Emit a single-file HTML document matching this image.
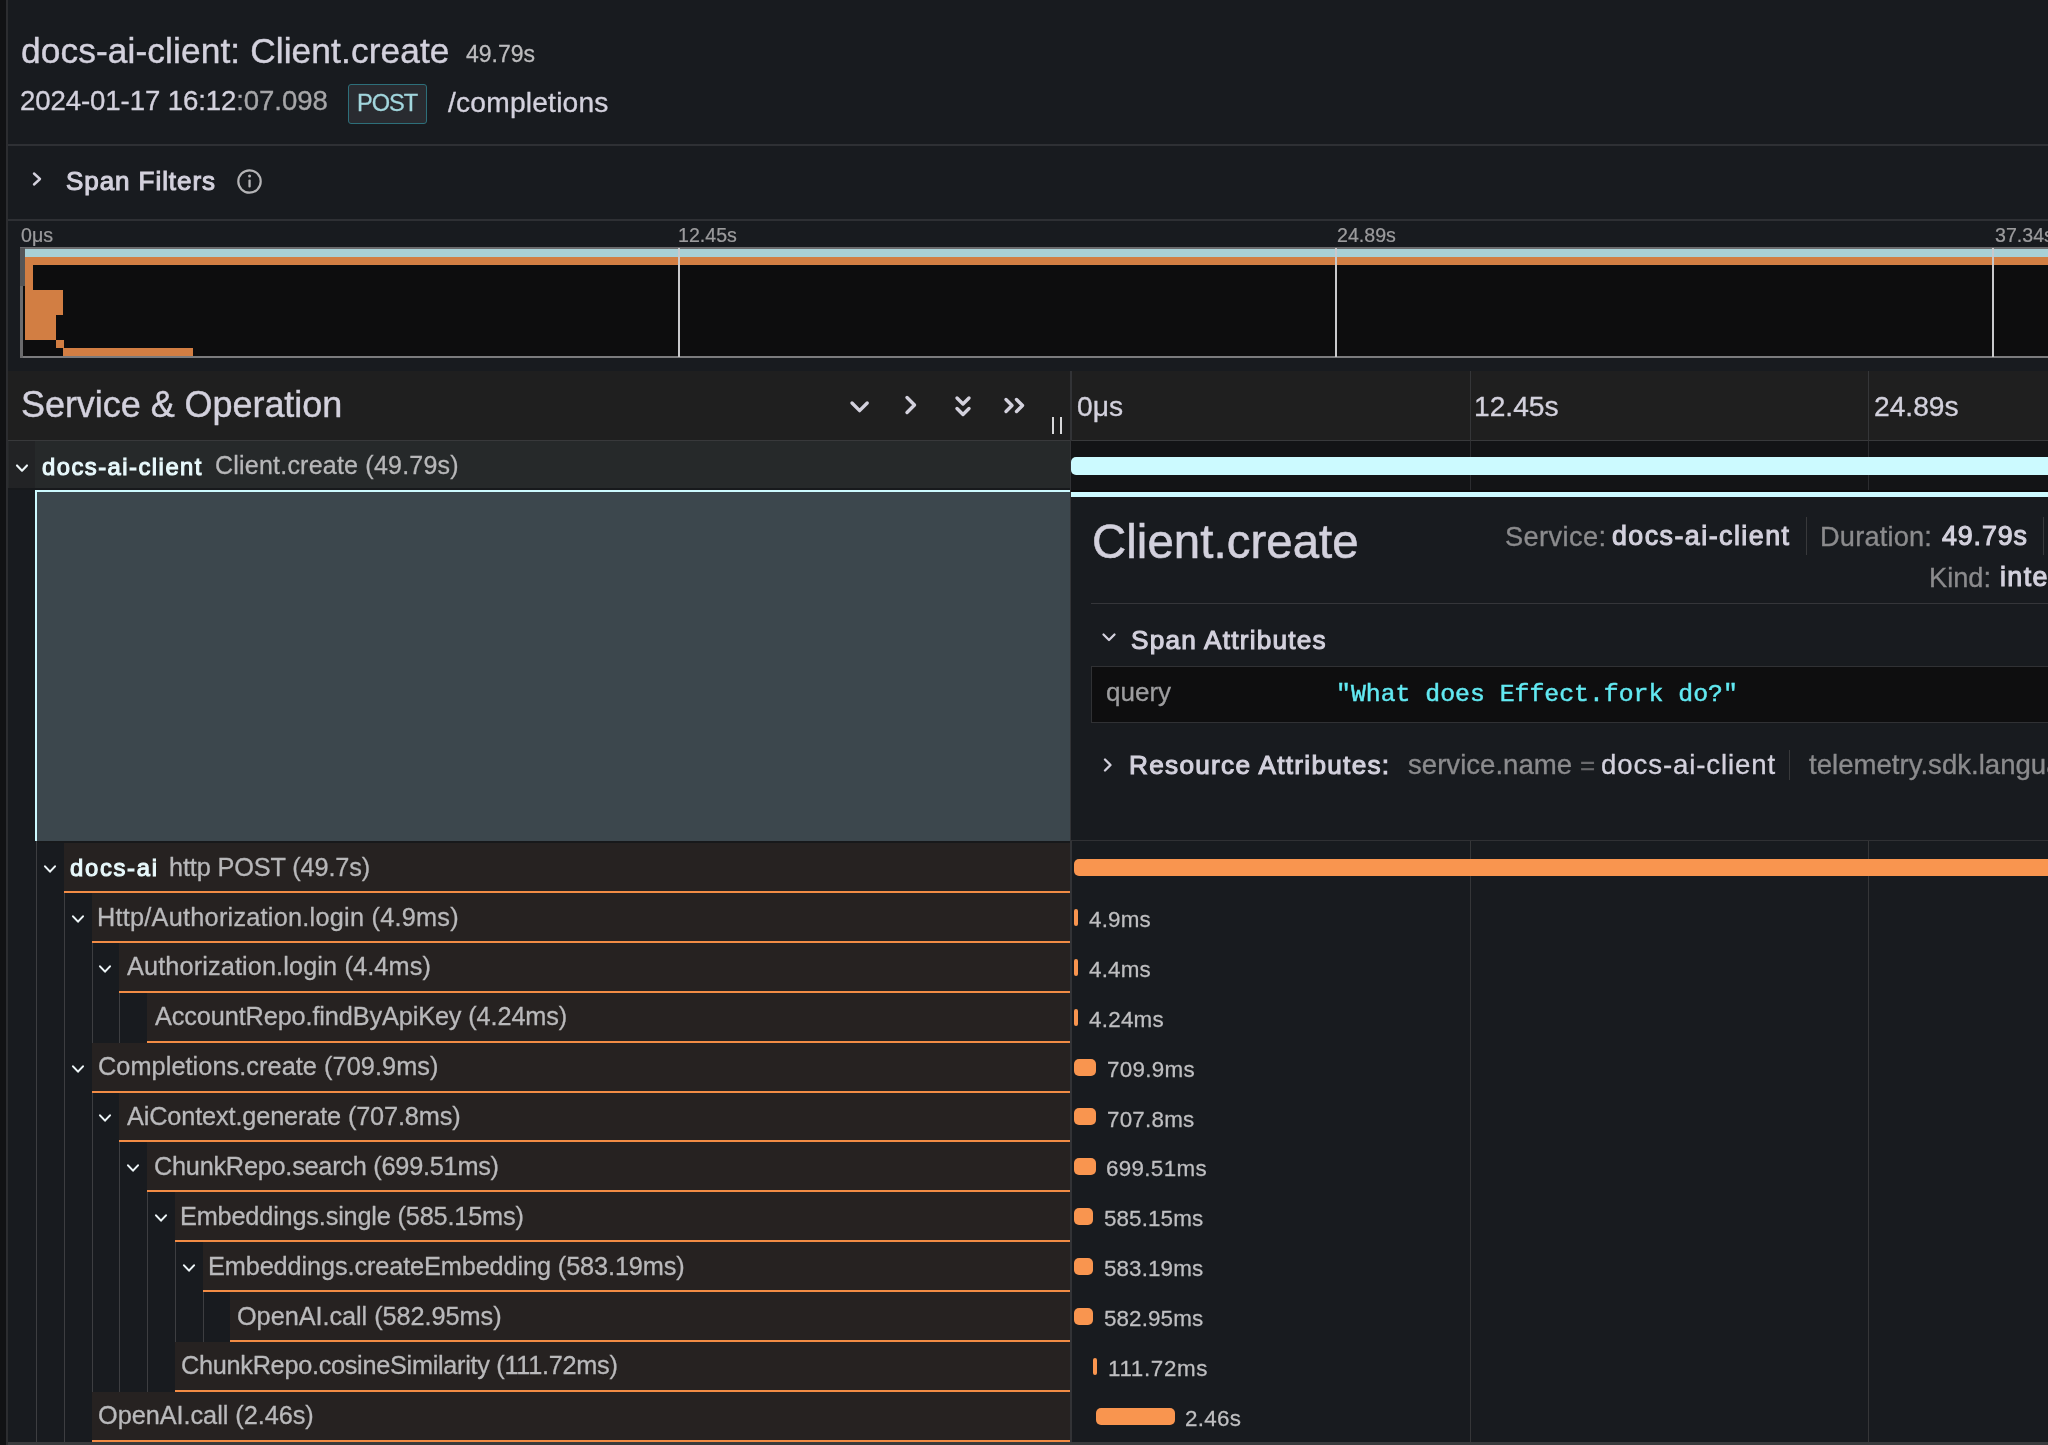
<!DOCTYPE html>
<html><head><meta charset="utf-8"><style>
html,body{margin:0;padding:0;}
body{width:2048px;height:1445px;overflow:hidden;background:#181b1f;position:relative;font-family:'Liberation Sans', sans-serif;}
body>div,body>svg{position:absolute;box-sizing:border-box;}
.t{white-space:pre;will-change:transform;}
</style></head><body>
<div style="left:0px;top:0px;width:6px;height:1445px;background:#111214;"></div>
<div style="left:6px;top:0px;width:2px;height:1445px;background:#2c2d30;"></div>
<div style="left:348px;top:84px;width:79px;height:40px;border:1px solid #2d6f7a;border-radius:3px;background:#292b30"></div>
<div style="left:8px;top:144px;width:2040px;height:2px;background:#2e3034;"></div>
<svg style="left:30px;top:170px" width="14" height="18" viewBox="0 0 14 18"><path d="M4 3.5 L10 9 L4 14.5" fill="none" stroke="#d3d1dd" stroke-width="2.4" stroke-linecap="round" stroke-linejoin="round"/></svg>
<svg style="left:236px;top:168px" width="27" height="27" viewBox="0 0 27 27"><circle cx="13.5" cy="13.5" r="11.2" fill="none" stroke="#b4b4b6" stroke-width="2.2"/><rect x="12.4" y="11.5" width="2.3" height="8" rx="1" fill="#b4b4b6"/><circle cx="13.55" cy="8" r="1.5" fill="#b4b4b6"/></svg>
<div style="left:8px;top:219px;width:2040px;height:2px;background:#2e3034;"></div>
<div style="left:20px;top:248px;width:2028px;height:110px;background:#0d0d0e;"></div>
<div style="left:20px;top:247px;width:2028px;height:2px;background:#6b6b6d;"></div>
<div style="left:20px;top:356px;width:2028px;height:2px;background:#7b7b7d;"></div>
<div style="left:20px;top:248px;width:3px;height:110px;background:#6b6b6d;"></div>
<div style="left:20px;top:248px;width:5px;height:38px;background:#555557;"></div>
<div style="left:25px;top:249px;width:2023px;height:7.5px;background:#a9d0d6;"></div>
<div style="left:25px;top:256.5px;width:2023px;height:8px;background:#d27e43;"></div>
<div style="left:25px;top:264.5px;width:8px;height:8.4px;background:#d27e43;"></div>
<div style="left:25px;top:272.9px;width:8px;height:8.4px;background:#d27e43;"></div>
<div style="left:25px;top:281.2px;width:8px;height:8.4px;background:#d27e43;"></div>
<div style="left:25px;top:289.6px;width:38px;height:8.4px;background:#d27e43;"></div>
<div style="left:25px;top:297.9px;width:38px;height:8.4px;background:#d27e43;"></div>
<div style="left:25px;top:306.3px;width:37.5px;height:8.4px;background:#d27e43;"></div>
<div style="left:25px;top:314.7px;width:31px;height:8.4px;background:#d27e43;"></div>
<div style="left:25px;top:323.0px;width:31px;height:8.4px;background:#d27e43;"></div>
<div style="left:25px;top:331.4px;width:31px;height:8.4px;background:#d27e43;"></div>
<div style="left:56px;top:339.7px;width:8px;height:8.4px;background:#d27e43;"></div>
<div style="left:63px;top:348.1px;width:130px;height:8.4px;background:#d27e43;"></div>
<div style="left:678px;top:248px;width:2px;height:109px;background:#c9c9cb;"></div>
<div style="left:1335px;top:248px;width:2px;height:109px;background:#c9c9cb;"></div>
<div style="left:1992px;top:248px;width:2px;height:109px;background:#c9c9cb;"></div>
<div style="left:8px;top:371px;width:2040px;height:69px;background:#1f1f1f;"></div>
<div style="left:8px;top:440px;width:2040px;height:1px;background:#38393b;"></div>
<svg style="left:846px;top:393px" width="200" height="28" viewBox="0 0 200 28"><g fill="none" stroke="#d3d1dd" stroke-width="3.4" stroke-linecap="round" stroke-linejoin="round"><path d="M6 10 L13.6 17.6 L21.2 10"/><path d="M61 4.5 L68.5 12 L61 19.5"/><path d="M111 5 L117 11 L123 5"/><path d="M111 15.5 L117 21.5 L123 15.5"/><path d="M160 6.5 L166 12.5 L160 18.5"/><path d="M170.5 6.5 L176.5 12.5 L170.5 18.5"/></g></svg>
<div style="left:1052px;top:417px;width:2px;height:17px;background:#d8d8da;"></div>
<div style="left:1060px;top:417px;width:2px;height:17px;background:#d8d8da;"></div>
<div style="left:1070px;top:371px;width:2px;height:1072px;background:#323336;"></div>
<div style="left:1470px;top:371px;width:1px;height:1072px;background:#353638;"></div>
<div style="left:1868px;top:371px;width:1px;height:1072px;background:#353638;"></div>
<div style="left:8px;top:441px;width:1062px;height:48px;background:#26292a;"></div>
<div style="left:9px;top:441px;width:26px;height:49px;background:#222325;"></div>
<div style="left:8px;top:488px;width:1062px;height:2px;background:#17191c;"></div>
<div style="left:1071px;top:441px;width:977px;height:49px;background:#131416;"></div>
<div style="left:1470px;top:441px;width:1px;height:49px;background:#2c2d30;"></div>
<div style="left:1868px;top:441px;width:1px;height:49px;background:#2c2d30;"></div>
<svg style="left:12.25px;top:459px" width="20" height="18" viewBox="0 0 20 18"><path d="M5 6.45 L10 11.75 L15 6.45" fill="none" stroke="#eef6f8" stroke-width="2.1" stroke-linecap="round" stroke-linejoin="round"/></svg>
<div style="left:1071px;top:457px;width:1100px;height:18px;background:#ccfaff;border-radius:5px"></div>
<div style="left:9px;top:490px;width:27px;height:351px;background:#181b1f;"></div>
<div style="left:36px;top:490px;width:1034px;height:2px;background:#ccfaff;"></div>
<div style="left:36px;top:492px;width:1034px;height:349px;background:#3c474d;"></div>
<div style="left:36px;top:841px;width:1034px;height:2px;background:#17191b;"></div>
<div style="left:35px;top:490px;width:2px;height:351px;background:#ccfaff;"></div>
<div style="left:1071px;top:490px;width:977px;height:2px;background:#0b0b0c;"></div>
<div style="left:1071px;top:492px;width:977px;height:5px;background:#ccfaff;"></div>
<div style="left:1071px;top:497px;width:977px;height:343px;background:#181b1f;"></div>
<div style="left:1071px;top:840px;width:977px;height:1px;background:#303134;"></div>
<div style="left:1806px;top:517px;width:1px;height:38px;background:#38393b;"></div>
<div style="left:2043px;top:517px;width:1px;height:38px;background:#38393b;"></div>
<div style="left:1091px;top:603px;width:957px;height:1px;background:#35363a;"></div>
<svg style="left:1100px;top:630px" width="18" height="16" viewBox="0 0 18 16"><path d="M3.5 4.5 L9 10 L14.5 4.5" fill="none" stroke="#d3d1dd" stroke-width="2.3" stroke-linecap="round" stroke-linejoin="round"/></svg>
<div style="left:1091px;top:666px;width:1000px;height:57px;border:1px solid #303134;background:#0e0e0f"></div>
<svg style="left:1100px;top:756px" width="18" height="18" viewBox="0 0 18 18"><path d="M5 3.5 L10.5 9 L5 14.5" fill="none" stroke="#d3d1dd" stroke-width="2.3" stroke-linecap="round" stroke-linejoin="round"/></svg>
<div style="left:1789px;top:750px;width:1px;height:30px;background:#38393b;"></div>
<div style="left:36.0px;top:841px;width:1px;height:52.1px;background:#3d3e41;"></div>
<div style="left:63.75px;top:843px;width:1006.25px;height:48.1px;background:#262221;"></div>
<div style="left:63.75px;top:891.1px;width:1006.25px;height:2px;background:#f28c45;"></div>
<svg style="left:39.85px;top:860.1px" width="20" height="18" viewBox="0 0 20 18"><path d="M5 6.35 L10 11.65 L15 6.35" fill="none" stroke="#eef6f8" stroke-width="2.1" stroke-linecap="round" stroke-linejoin="round"/></svg>
<div style="left:1074px;top:859.1px;width:1126px;height:17px;background:#f9954f;border-radius:5px"></div>
<div style="left:36.0px;top:893.11px;width:1px;height:49.87px;background:#3d3e41;"></div>
<div style="left:63.75px;top:893.11px;width:1px;height:49.87px;background:#3d3e41;"></div>
<div style="left:91.5px;top:893.11px;width:978.5px;height:47.87px;background:#262221;"></div>
<div style="left:91.5px;top:940.98px;width:978.5px;height:2px;background:#f28c45;"></div>
<svg style="left:67.60px;top:909.98px" width="20" height="18" viewBox="0 0 20 18"><path d="M5 6.35 L10 11.65 L15 6.35" fill="none" stroke="#eef6f8" stroke-width="2.1" stroke-linecap="round" stroke-linejoin="round"/></svg>
<div style="left:1074px;top:908.98px;width:4px;height:17px;background:#f9954f;border-radius:2.0px"></div>
<div style="left:36.0px;top:942.98px;width:1px;height:49.87px;background:#3d3e41;"></div>
<div style="left:63.75px;top:942.98px;width:1px;height:49.87px;background:#3d3e41;"></div>
<div style="left:91.5px;top:942.98px;width:1px;height:49.87px;background:#3d3e41;"></div>
<div style="left:119.25px;top:942.98px;width:950.75px;height:47.87px;background:#262221;"></div>
<div style="left:119.25px;top:990.85px;width:950.75px;height:2px;background:#f28c45;"></div>
<svg style="left:95.35px;top:959.85px" width="20" height="18" viewBox="0 0 20 18"><path d="M5 6.35 L10 11.65 L15 6.35" fill="none" stroke="#eef6f8" stroke-width="2.1" stroke-linecap="round" stroke-linejoin="round"/></svg>
<div style="left:1074px;top:958.85px;width:4px;height:17px;background:#f9954f;border-radius:2.0px"></div>
<div style="left:36.0px;top:992.85px;width:1px;height:49.87px;background:#3d3e41;"></div>
<div style="left:63.75px;top:992.85px;width:1px;height:49.87px;background:#3d3e41;"></div>
<div style="left:91.5px;top:992.85px;width:1px;height:49.87px;background:#3d3e41;"></div>
<div style="left:119.25px;top:992.85px;width:1px;height:49.87px;background:#3d3e41;"></div>
<div style="left:147.0px;top:992.85px;width:923.0px;height:47.87px;background:#262221;"></div>
<div style="left:147.0px;top:1040.72px;width:923.0px;height:2px;background:#f28c45;"></div>
<div style="left:1074px;top:1008.72px;width:4px;height:17px;background:#f9954f;border-radius:2.0px"></div>
<div style="left:36.0px;top:1042.72px;width:1px;height:49.88px;background:#3d3e41;"></div>
<div style="left:63.75px;top:1042.72px;width:1px;height:49.88px;background:#3d3e41;"></div>
<div style="left:91.5px;top:1042.72px;width:978.5px;height:47.88px;background:#262221;"></div>
<div style="left:91.5px;top:1090.6px;width:978.5px;height:2px;background:#f28c45;"></div>
<svg style="left:67.60px;top:1059.6px" width="20" height="18" viewBox="0 0 20 18"><path d="M5 6.35 L10 11.65 L15 6.35" fill="none" stroke="#eef6f8" stroke-width="2.1" stroke-linecap="round" stroke-linejoin="round"/></svg>
<div style="left:1074px;top:1058.6px;width:22px;height:17px;background:#f9954f;border-radius:5px"></div>
<div style="left:36.0px;top:1092.6px;width:1px;height:49.87px;background:#3d3e41;"></div>
<div style="left:63.75px;top:1092.6px;width:1px;height:49.87px;background:#3d3e41;"></div>
<div style="left:91.5px;top:1092.6px;width:1px;height:49.87px;background:#3d3e41;"></div>
<div style="left:119.25px;top:1092.6px;width:950.75px;height:47.87px;background:#262221;"></div>
<div style="left:119.25px;top:1140.47px;width:950.75px;height:2px;background:#f28c45;"></div>
<svg style="left:95.35px;top:1109.47px" width="20" height="18" viewBox="0 0 20 18"><path d="M5 6.35 L10 11.65 L15 6.35" fill="none" stroke="#eef6f8" stroke-width="2.1" stroke-linecap="round" stroke-linejoin="round"/></svg>
<div style="left:1074px;top:1108.47px;width:22px;height:17px;background:#f9954f;border-radius:5px"></div>
<div style="left:36.0px;top:1142.47px;width:1px;height:49.88px;background:#3d3e41;"></div>
<div style="left:63.75px;top:1142.47px;width:1px;height:49.88px;background:#3d3e41;"></div>
<div style="left:91.5px;top:1142.47px;width:1px;height:49.88px;background:#3d3e41;"></div>
<div style="left:119.25px;top:1142.47px;width:1px;height:49.88px;background:#3d3e41;"></div>
<div style="left:147.0px;top:1142.47px;width:923.0px;height:47.88px;background:#262221;"></div>
<div style="left:147.0px;top:1190.35px;width:923.0px;height:2px;background:#f28c45;"></div>
<svg style="left:123.10px;top:1159.35px" width="20" height="18" viewBox="0 0 20 18"><path d="M5 6.35 L10 11.65 L15 6.35" fill="none" stroke="#eef6f8" stroke-width="2.1" stroke-linecap="round" stroke-linejoin="round"/></svg>
<div style="left:1074px;top:1158.35px;width:22px;height:17px;background:#f9954f;border-radius:5px"></div>
<div style="left:36.0px;top:1192.35px;width:1px;height:49.87px;background:#3d3e41;"></div>
<div style="left:63.75px;top:1192.35px;width:1px;height:49.87px;background:#3d3e41;"></div>
<div style="left:91.5px;top:1192.35px;width:1px;height:49.87px;background:#3d3e41;"></div>
<div style="left:119.25px;top:1192.35px;width:1px;height:49.87px;background:#3d3e41;"></div>
<div style="left:147.0px;top:1192.35px;width:1px;height:49.87px;background:#3d3e41;"></div>
<div style="left:174.75px;top:1192.35px;width:895.25px;height:47.87px;background:#262221;"></div>
<div style="left:174.75px;top:1240.22px;width:895.25px;height:2px;background:#f28c45;"></div>
<svg style="left:150.85px;top:1209.22px" width="20" height="18" viewBox="0 0 20 18"><path d="M5 6.35 L10 11.65 L15 6.35" fill="none" stroke="#eef6f8" stroke-width="2.1" stroke-linecap="round" stroke-linejoin="round"/></svg>
<div style="left:1074px;top:1208.22px;width:19px;height:17px;background:#f9954f;border-radius:5px"></div>
<div style="left:36.0px;top:1242.22px;width:1px;height:49.88px;background:#3d3e41;"></div>
<div style="left:63.75px;top:1242.22px;width:1px;height:49.88px;background:#3d3e41;"></div>
<div style="left:91.5px;top:1242.22px;width:1px;height:49.88px;background:#3d3e41;"></div>
<div style="left:119.25px;top:1242.22px;width:1px;height:49.88px;background:#3d3e41;"></div>
<div style="left:147.0px;top:1242.22px;width:1px;height:49.88px;background:#3d3e41;"></div>
<div style="left:174.75px;top:1242.22px;width:1px;height:49.88px;background:#3d3e41;"></div>
<div style="left:202.5px;top:1242.22px;width:867.5px;height:47.88px;background:#262221;"></div>
<div style="left:202.5px;top:1290.1px;width:867.5px;height:2px;background:#f28c45;"></div>
<svg style="left:178.60px;top:1259.1px" width="20" height="18" viewBox="0 0 20 18"><path d="M5 6.35 L10 11.65 L15 6.35" fill="none" stroke="#eef6f8" stroke-width="2.1" stroke-linecap="round" stroke-linejoin="round"/></svg>
<div style="left:1074px;top:1258.1px;width:19px;height:17px;background:#f9954f;border-radius:5px"></div>
<div style="left:36.0px;top:1292.1px;width:1px;height:49.87px;background:#3d3e41;"></div>
<div style="left:63.75px;top:1292.1px;width:1px;height:49.87px;background:#3d3e41;"></div>
<div style="left:91.5px;top:1292.1px;width:1px;height:49.87px;background:#3d3e41;"></div>
<div style="left:119.25px;top:1292.1px;width:1px;height:49.87px;background:#3d3e41;"></div>
<div style="left:147.0px;top:1292.1px;width:1px;height:49.87px;background:#3d3e41;"></div>
<div style="left:174.75px;top:1292.1px;width:1px;height:49.87px;background:#3d3e41;"></div>
<div style="left:202.5px;top:1292.1px;width:1px;height:49.87px;background:#3d3e41;"></div>
<div style="left:230.25px;top:1292.1px;width:839.75px;height:47.87px;background:#262221;"></div>
<div style="left:230.25px;top:1339.97px;width:839.75px;height:2px;background:#f28c45;"></div>
<div style="left:1074px;top:1307.97px;width:19px;height:17px;background:#f9954f;border-radius:5px"></div>
<div style="left:36.0px;top:1341.97px;width:1px;height:49.88px;background:#3d3e41;"></div>
<div style="left:63.75px;top:1341.97px;width:1px;height:49.88px;background:#3d3e41;"></div>
<div style="left:91.5px;top:1341.97px;width:1px;height:49.88px;background:#3d3e41;"></div>
<div style="left:119.25px;top:1341.97px;width:1px;height:49.88px;background:#3d3e41;"></div>
<div style="left:147.0px;top:1341.97px;width:1px;height:49.88px;background:#3d3e41;"></div>
<div style="left:174.75px;top:1341.97px;width:895.25px;height:47.88px;background:#262221;"></div>
<div style="left:174.75px;top:1389.85px;width:895.25px;height:2px;background:#f28c45;"></div>
<div style="left:1093px;top:1357.85px;width:4px;height:17px;background:#f9954f;border-radius:2.0px"></div>
<div style="left:36.0px;top:1391.85px;width:1px;height:49.87px;background:#3d3e41;"></div>
<div style="left:63.75px;top:1391.85px;width:1px;height:49.87px;background:#3d3e41;"></div>
<div style="left:91.5px;top:1391.85px;width:978.5px;height:47.87px;background:#262221;"></div>
<div style="left:91.5px;top:1439.72px;width:978.5px;height:2px;background:#f28c45;"></div>
<div style="left:1096px;top:1407.72px;width:78.59999999999991px;height:17px;background:#f9954f;border-radius:5px"></div>
<div style="left:8px;top:1442px;width:2040px;height:3px;background:#3a3b3d;"></div>
<div class="t" style="left:21.00px;top:33.31px;font-size:35.3px;line-height:35.3px;font-family:'Liberation Sans', sans-serif;letter-spacing:0.1px;"><span style="color:#d3d1dd;font-weight:400;-webkit-text-stroke:0.42px #d3d1dd;">docs-ai-client: Client.create</span></div>
<div class="t" style="left:465.80px;top:43.33px;font-size:23px;line-height:23px;font-family:'Liberation Sans', sans-serif;"><span style="color:#bcbcbe;font-weight:400;-webkit-text-stroke:0.28px #bcbcbe;">49.79s</span></div>
<div class="t" style="left:20.00px;top:87.43px;font-size:27.6px;line-height:27.6px;font-family:'Liberation Sans', sans-serif;letter-spacing:-0.1px;"><span style="color:#d3d1dd;font-weight:400;-webkit-text-stroke:0.33px #d3d1dd;">2024-01-17 16:12</span><span style="color:#a6a6a8;font-weight:400;-webkit-text-stroke:0.33px #a6a6a8;">:07.098</span></div>
<div class="t" style="left:356.80px;top:92.02px;font-size:23.6px;line-height:23.6px;font-family:'Liberation Sans', sans-serif;letter-spacing:-1.0px;"><span style="color:#a2d6dd;font-weight:400;-webkit-text-stroke:0.28px #a2d6dd;">POST</span></div>
<div class="t" style="left:448.00px;top:88.12px;font-size:28.2px;line-height:28.2px;font-family:'Liberation Sans', sans-serif;letter-spacing:0.2px;"><span style="color:#d3d1dd;font-weight:400;-webkit-text-stroke:0.34px #d3d1dd;">/completions</span></div>
<div class="t" style="left:66.00px;top:167.69px;font-size:26.0px;line-height:26.0px;font-family:'Liberation Sans', sans-serif;letter-spacing:0.934px;"><span style="color:#d3d1dd;font-weight:400;-webkit-text-stroke:1.04px #d3d1dd;">Span Filters</span></div>
<div class="t" style="left:21.00px;top:226.11px;font-size:19.6px;line-height:19.6px;font-family:'Liberation Sans', sans-serif;"><span style="color:#9b9b9d;font-weight:400;-webkit-text-stroke:0.24px #9b9b9d;">0μs</span></div>
<div class="t" style="left:678.00px;top:226.11px;font-size:19.6px;line-height:19.6px;font-family:'Liberation Sans', sans-serif;"><span style="color:#9b9b9d;font-weight:400;-webkit-text-stroke:0.24px #9b9b9d;">12.45s</span></div>
<div class="t" style="left:1337.00px;top:226.11px;font-size:19.6px;line-height:19.6px;font-family:'Liberation Sans', sans-serif;"><span style="color:#9b9b9d;font-weight:400;-webkit-text-stroke:0.24px #9b9b9d;">24.89s</span></div>
<div class="t" style="left:1995.00px;top:226.11px;font-size:19.6px;line-height:19.6px;font-family:'Liberation Sans', sans-serif;"><span style="color:#9b9b9d;font-weight:400;-webkit-text-stroke:0.24px #9b9b9d;">37.34s</span></div>
<div class="t" style="left:20.60px;top:387.12px;font-size:36px;line-height:36px;font-family:'Liberation Sans', sans-serif;letter-spacing:-0.05px;"><span style="color:#d3d1dd;font-weight:400;-webkit-text-stroke:0.43px #d3d1dd;">Service &amp; Operation</span></div>
<div class="t" style="left:1077.00px;top:392.12px;font-size:28.2px;line-height:28.2px;font-family:'Liberation Sans', sans-serif;"><span style="color:#d3d1dd;font-weight:400;-webkit-text-stroke:0.34px #d3d1dd;">0μs</span></div>
<div class="t" style="left:1473.50px;top:392.12px;font-size:28.2px;line-height:28.2px;font-family:'Liberation Sans', sans-serif;"><span style="color:#d3d1dd;font-weight:400;-webkit-text-stroke:0.34px #d3d1dd;">12.45s</span></div>
<div class="t" style="left:1874.00px;top:392.12px;font-size:28.2px;line-height:28.2px;font-family:'Liberation Sans', sans-serif;"><span style="color:#d3d1dd;font-weight:400;-webkit-text-stroke:0.34px #d3d1dd;">24.89s</span></div>
<div class="t" style="left:41.80px;top:455.05px;font-size:23.8px;line-height:23.8px;font-family:'Liberation Sans', sans-serif;letter-spacing:1.479px;"><span style="color:#e8f9fc;font-weight:400;-webkit-text-stroke:1.07px #e8f9fc;">docs-ai-client</span></div>
<div class="t" style="left:215.00px;top:453.43px;font-size:25px;line-height:25px;font-family:'Liberation Sans', sans-serif;letter-spacing:0.22px;"><span style="color:#b7b7b9;font-weight:400;-webkit-text-stroke:0.3px #b7b7b9;">Client.create (49.79s)</span></div>
<div class="t" style="left:1091.60px;top:517.97px;font-size:47.4px;line-height:47.4px;font-family:'Liberation Sans', sans-serif;letter-spacing:0.05px;"><span style="color:#d3d1dd;font-weight:400;-webkit-text-stroke:0.57px #d3d1dd;">Client.create</span></div>
<div class="t" style="left:1505.00px;top:522.87px;font-size:27.2px;line-height:27.2px;font-family:'Liberation Sans', sans-serif;letter-spacing:0.406px;"><span style="color:#8b8b8d;font-weight:400;-webkit-text-stroke:0.33px #8b8b8d;">Service:</span></div>
<div class="t" style="left:1612.20px;top:523.21px;font-size:26.8px;line-height:26.8px;font-family:'Liberation Sans', sans-serif;letter-spacing:1.468px;"><span style="color:#d3d1dd;font-weight:400;-webkit-text-stroke:1.07px #d3d1dd;">docs-ai-client</span></div>
<div class="t" style="left:1820.00px;top:522.87px;font-size:27.2px;line-height:27.2px;font-family:'Liberation Sans', sans-serif;letter-spacing:0.192px;"><span style="color:#8b8b8d;font-weight:400;-webkit-text-stroke:0.33px #8b8b8d;">Duration:</span></div>
<div class="t" style="left:1942.30px;top:523.21px;font-size:26.8px;line-height:26.8px;font-family:'Liberation Sans', sans-serif;letter-spacing:0.888px;"><span style="color:#d3d1dd;font-weight:400;-webkit-text-stroke:1.07px #d3d1dd;">49.79s</span></div>
<div class="t" style="left:1929.40px;top:563.67px;font-size:27.2px;line-height:27.2px;font-family:'Liberation Sans', sans-serif;letter-spacing:0.021px;"><span style="color:#8b8b8d;font-weight:400;-webkit-text-stroke:0.33px #8b8b8d;">Kind:</span></div>
<div class="t" style="left:2000.00px;top:564.01px;font-size:26.8px;line-height:26.8px;font-family:'Liberation Sans', sans-serif;letter-spacing:1.4px;"><span style="color:#d3d1dd;font-weight:400;-webkit-text-stroke:1.07px #d3d1dd;">internal</span></div>
<div class="t" style="left:1130.50px;top:626.72px;font-size:26.2px;line-height:26.2px;font-family:'Liberation Sans', sans-serif;letter-spacing:1.217px;"><span style="color:#d3d1dd;font-weight:400;-webkit-text-stroke:1.05px #d3d1dd;">Span Attributes</span></div>
<div class="t" style="left:1106.40px;top:679.29px;font-size:26px;line-height:26px;font-family:'Liberation Sans', sans-serif;"><span style="color:#9d9d9f;font-weight:400;-webkit-text-stroke:0.31px #9d9d9f;">query</span></div>
<div class="t" style="left:1336.00px;top:682.30px;font-size:24.8px;line-height:24.8px;font-family:'Liberation Mono', monospace;-webkit-text-stroke:0.45px #62e9f2;"><span style="color:#62e9f2;font-weight:400;">"What does Effect.fork do?"</span></div>
<div class="t" style="left:1129.00px;top:752.02px;font-size:26.2px;line-height:26.2px;font-family:'Liberation Sans', sans-serif;letter-spacing:1.28px;"><span style="color:#d3d1dd;font-weight:400;-webkit-text-stroke:1.05px #d3d1dd;">Resource Attributes:</span></div>
<div class="t" style="left:1407.70px;top:751.03px;font-size:27.6px;line-height:27.6px;font-family:'Liberation Sans', sans-serif;"><span style="color:#8b8b8d;font-weight:400;-webkit-text-stroke:0.33px #8b8b8d;">service.name</span></div>
<div class="t" style="left:1580.00px;top:752.39px;font-size:26px;line-height:26px;font-family:'Liberation Sans', sans-serif;"><span style="color:#6b6b6d;font-weight:400;-webkit-text-stroke:0.31px #6b6b6d;">=</span></div>
<div class="t" style="left:1601.00px;top:751.03px;font-size:27.6px;line-height:27.6px;font-family:'Liberation Sans', sans-serif;letter-spacing:0.9px;"><span style="color:#d3d1dd;font-weight:400;-webkit-text-stroke:0.33px #d3d1dd;">docs-ai-client</span></div>
<div class="t" style="left:1809.30px;top:751.03px;font-size:27.6px;line-height:27.6px;font-family:'Liberation Sans', sans-serif;"><span style="color:#8b8b8d;font-weight:400;-webkit-text-stroke:0.33px #8b8b8d;">telemetry.sdk.language = nodejs</span></div>
<div class="t" style="left:69.75px;top:856.45px;font-size:23.8px;line-height:23.8px;font-family:'Liberation Sans', sans-serif;letter-spacing:1.712px;"><span style="color:#e8f9fc;font-weight:400;-webkit-text-stroke:1.07px #e8f9fc;">docs-ai</span></div>
<div class="t" style="left:168.90px;top:854.68px;font-size:25.3px;line-height:25.3px;font-family:'Liberation Sans', sans-serif;letter-spacing:-0.14px;"><span style="color:#b7b7b9;font-weight:400;-webkit-text-stroke:0.3px #b7b7b9;">http POST (49.7s)</span></div>
<div class="t" style="left:97.10px;top:904.56px;font-size:25.3px;line-height:25.3px;font-family:'Liberation Sans', sans-serif;letter-spacing:0.236px;"><span style="color:#b9b9bb;font-weight:400;-webkit-text-stroke:0.3px #b9b9bb;">Http/Authorization.login (4.9ms)</span></div>
<div class="t" style="left:1088.50px;top:909.01px;font-size:22.4px;line-height:22.4px;font-family:'Liberation Sans', sans-serif;letter-spacing:0.181px;"><span style="color:#bfbfc1;font-weight:400;-webkit-text-stroke:0.27px #bfbfc1;">4.9ms</span></div>
<div class="t" style="left:126.85px;top:954.43px;font-size:25.3px;line-height:25.3px;font-family:'Liberation Sans', sans-serif;letter-spacing:0.113px;"><span style="color:#b9b9bb;font-weight:400;-webkit-text-stroke:0.3px #b9b9bb;">Authorization.login (4.4ms)</span></div>
<div class="t" style="left:1088.50px;top:958.88px;font-size:22.4px;line-height:22.4px;font-family:'Liberation Sans', sans-serif;letter-spacing:0.181px;"><span style="color:#bfbfc1;font-weight:400;-webkit-text-stroke:0.27px #bfbfc1;">4.4ms</span></div>
<div class="t" style="left:154.60px;top:1004.30px;font-size:25.3px;line-height:25.3px;font-family:'Liberation Sans', sans-serif;letter-spacing:-0.124px;"><span style="color:#b9b9bb;font-weight:400;-webkit-text-stroke:0.3px #b9b9bb;">AccountRepo.findByApiKey (4.24ms)</span></div>
<div class="t" style="left:1088.50px;top:1008.75px;font-size:22.4px;line-height:22.4px;font-family:'Liberation Sans', sans-serif;letter-spacing:0.254px;"><span style="color:#bfbfc1;font-weight:400;-webkit-text-stroke:0.27px #bfbfc1;">4.24ms</span></div>
<div class="t" style="left:98.10px;top:1054.18px;font-size:25.3px;line-height:25.3px;font-family:'Liberation Sans', sans-serif;letter-spacing:0.059px;"><span style="color:#b9b9bb;font-weight:400;-webkit-text-stroke:0.3px #b9b9bb;">Completions.create (709.9ms)</span></div>
<div class="t" style="left:1106.60px;top:1058.63px;font-size:22.4px;line-height:22.4px;font-family:'Liberation Sans', sans-serif;letter-spacing:0.286px;"><span style="color:#bfbfc1;font-weight:400;-webkit-text-stroke:0.27px #bfbfc1;">709.9ms</span></div>
<div class="t" style="left:126.85px;top:1104.05px;font-size:25.3px;line-height:25.3px;font-family:'Liberation Sans', sans-serif;letter-spacing:-0.142px;"><span style="color:#b9b9bb;font-weight:400;-webkit-text-stroke:0.3px #b9b9bb;">AiContext.generate (707.8ms)</span></div>
<div class="t" style="left:1107.00px;top:1108.50px;font-size:22.4px;line-height:22.4px;font-family:'Liberation Sans', sans-serif;letter-spacing:0.22px;"><span style="color:#bfbfc1;font-weight:400;-webkit-text-stroke:0.27px #bfbfc1;">707.8ms</span></div>
<div class="t" style="left:153.60px;top:1153.93px;font-size:25.3px;line-height:25.3px;font-family:'Liberation Sans', sans-serif;letter-spacing:-0.25px;"><span style="color:#b9b9bb;font-weight:400;-webkit-text-stroke:0.3px #b9b9bb;">ChunkRepo.search (699.51ms)</span></div>
<div class="t" style="left:1106.00px;top:1158.38px;font-size:22.4px;line-height:22.4px;font-family:'Liberation Sans', sans-serif;letter-spacing:0.324px;"><span style="color:#bfbfc1;font-weight:400;-webkit-text-stroke:0.27px #bfbfc1;">699.51ms</span></div>
<div class="t" style="left:180.35px;top:1203.80px;font-size:25.3px;line-height:25.3px;font-family:'Liberation Sans', sans-serif;letter-spacing:-0.181px;"><span style="color:#b9b9bb;font-weight:400;-webkit-text-stroke:0.3px #b9b9bb;">Embeddings.single (585.15ms)</span></div>
<div class="t" style="left:1104.40px;top:1208.25px;font-size:22.4px;line-height:22.4px;font-family:'Liberation Sans', sans-serif;letter-spacing:0.109px;"><span style="color:#bfbfc1;font-weight:400;-webkit-text-stroke:0.27px #bfbfc1;">585.15ms</span></div>
<div class="t" style="left:208.10px;top:1253.68px;font-size:25.3px;line-height:25.3px;font-family:'Liberation Sans', sans-serif;letter-spacing:-0.116px;"><span style="color:#b9b9bb;font-weight:400;-webkit-text-stroke:0.3px #b9b9bb;">Embeddings.createEmbedding (583.19ms)</span></div>
<div class="t" style="left:1104.40px;top:1258.13px;font-size:22.4px;line-height:22.4px;font-family:'Liberation Sans', sans-serif;letter-spacing:0.109px;"><span style="color:#bfbfc1;font-weight:400;-webkit-text-stroke:0.27px #bfbfc1;">583.19ms</span></div>
<div class="t" style="left:236.85px;top:1303.55px;font-size:25.3px;line-height:25.3px;font-family:'Liberation Sans', sans-serif;letter-spacing:-0.053px;"><span style="color:#b9b9bb;font-weight:400;-webkit-text-stroke:0.3px #b9b9bb;">OpenAI.call (582.95ms)</span></div>
<div class="t" style="left:1104.40px;top:1308.00px;font-size:22.4px;line-height:22.4px;font-family:'Liberation Sans', sans-serif;letter-spacing:0.109px;"><span style="color:#bfbfc1;font-weight:400;-webkit-text-stroke:0.27px #bfbfc1;">582.95ms</span></div>
<div class="t" style="left:181.35px;top:1353.43px;font-size:25.3px;line-height:25.3px;font-family:'Liberation Sans', sans-serif;letter-spacing:-0.298px;"><span style="color:#b9b9bb;font-weight:400;-webkit-text-stroke:0.3px #b9b9bb;">ChunkRepo.cosineSimilarity (111.72ms)</span></div>
<div class="t" style="left:1107.50px;top:1357.88px;font-size:22.4px;line-height:22.4px;font-family:'Liberation Sans', sans-serif;letter-spacing:0.641px;"><span style="color:#bfbfc1;font-weight:400;-webkit-text-stroke:0.27px #bfbfc1;">111.72ms</span></div>
<div class="t" style="left:98.10px;top:1403.30px;font-size:25.3px;line-height:25.3px;font-family:'Liberation Sans', sans-serif;letter-spacing:-0.045px;"><span style="color:#b9b9bb;font-weight:400;-webkit-text-stroke:0.3px #b9b9bb;">OpenAI.call (2.46s)</span></div>
<div class="t" style="left:1184.60px;top:1407.75px;font-size:22.4px;line-height:22.4px;font-family:'Liberation Sans', sans-serif;letter-spacing:0.28px;"><span style="color:#bfbfc1;font-weight:400;-webkit-text-stroke:0.27px #bfbfc1;">2.46s</span></div>
</body></html>
